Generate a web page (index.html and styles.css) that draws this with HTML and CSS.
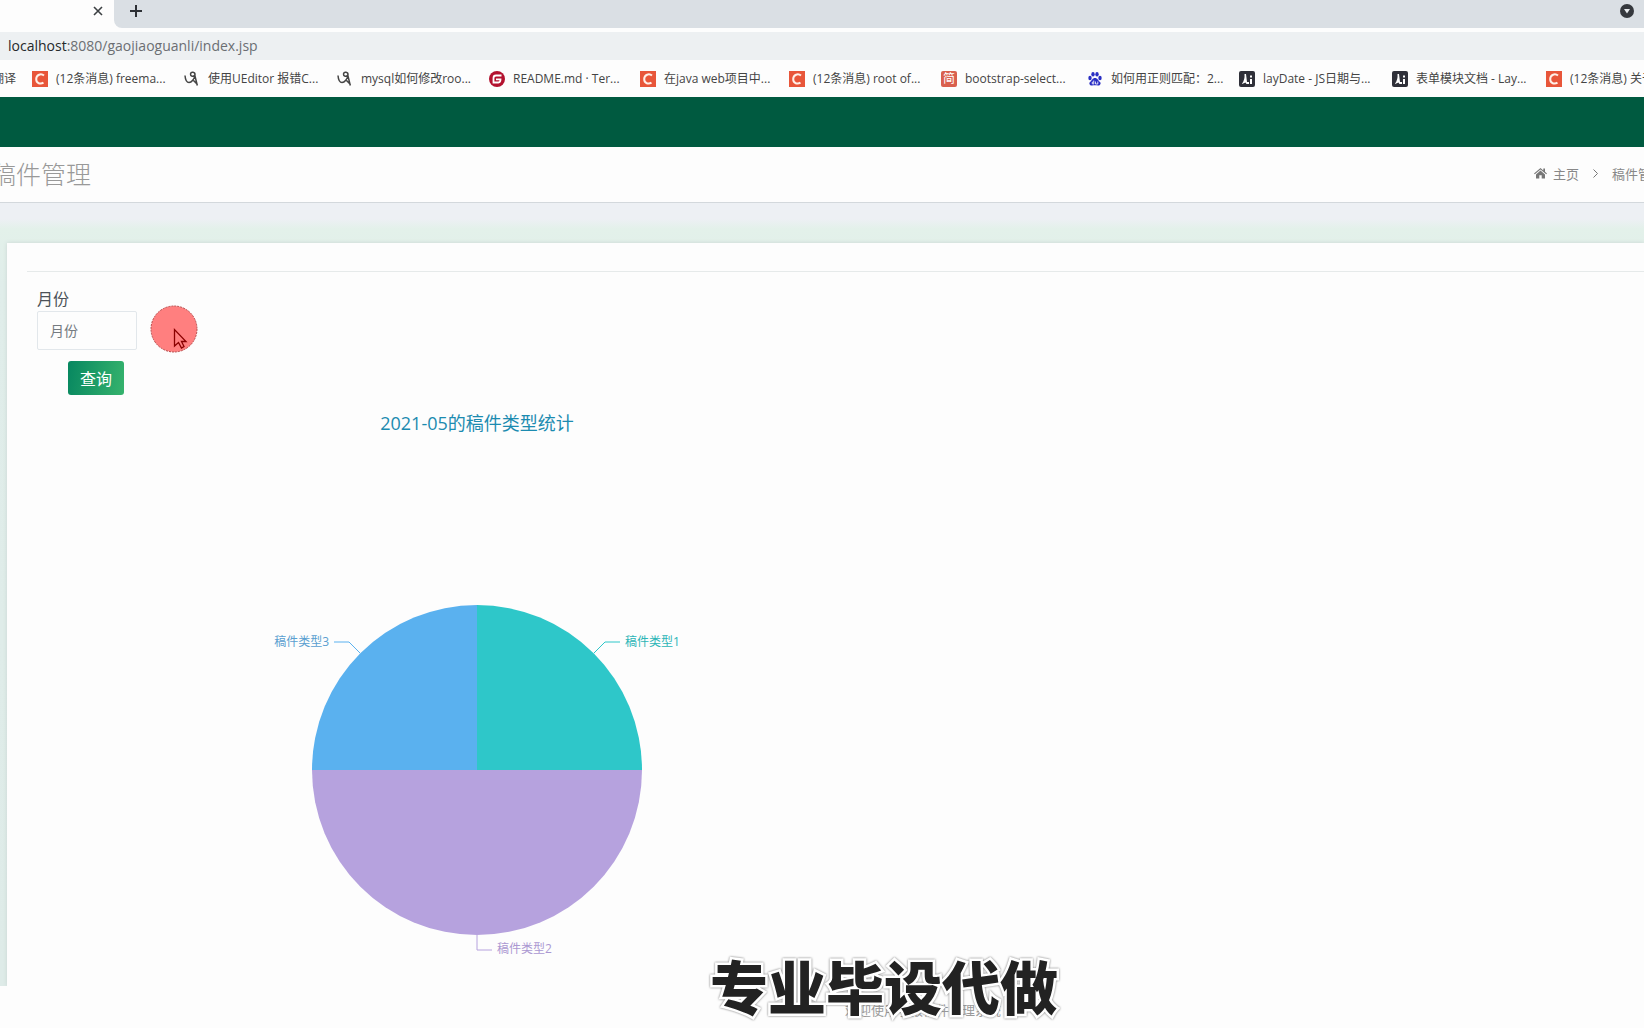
FILE: index.html
```html
<!DOCTYPE html>
<html lang="zh-CN">
<head>
<meta charset="utf-8">
<title>稿件管理</title>
<link rel="stylesheet" href="styles.css">
</head>
<body>
<svg class="defs" aria-hidden="true">
  <symbol id="i-c" viewBox="0 0 16 16"><rect width="16" height="16" fill="#e8563a"/><path d="M12 4.600C9.200 2.200 4.300 3.400 4.200 8.100C4.100 12.600 8.600 13.500 11.500 11.700" fill="none" stroke="#fff0e8" stroke-width="2"/></symbol>
  <symbol id="i-pen" viewBox="0 0 16 16"><path d="M1 4.500C1.300 8 2.500 11.500 5 11.500C7.500 11.500 10.500 8 11 4C11.200 .8 7 .4 6.500 3C6.300 5.600 9.500 6 10.800 4.200L13.300 14.500M9.500 9.500L13.500 13.500" fill="none" stroke="#444" stroke-width="1.500"/></symbol>
  <symbol id="i-g" viewBox="0 0 16 16"><circle cx="8" cy="8" r="8" fill="#b3122f"/><path d="M12.500 4.500H7Q4.500 4.500 4.500 7V11.500H9.500Q11.500 11.500 11.500 8.300H7" fill="none" stroke="#fff" stroke-width="1.800"/></symbol>
  <symbol id="i-paw" viewBox="0 0 16 16"><g fill="#2a2fc4"><ellipse cx="3" cy="7" rx="1.700" ry="2.200"/><ellipse cx="6" cy="3.300" rx="1.700" ry="2.300"/><ellipse cx="10" cy="3.300" rx="1.700" ry="2.300"/><ellipse cx="13" cy="7" rx="1.700" ry="2.200"/><path d="M8 7C10.500 7 11 9.500 13 11C14.500 12.500 13 14.800 11 14.500C9 14 7 14 5 14.500C3 14.800 1.500 12.500 3 11C5 9.500 5.500 7 8 7"/></g><path d="M6.800 9.500V13H5.500Q4.700 12 5.500 11H6.800M8.500 10.500V13H10.800V10.500" fill="none" stroke="#fff" stroke-width=".8"/></symbol>
  <symbol id="i-lay" viewBox="0 0 16 16"><rect width="16" height="16" rx="2" fill="#2f3039"/><path d="M3 12.500Q6 9 5.500 3H7L8 11H10V13H7.500L6.500 11.500L3 13Z M11 8H13V13H11Z M11 4.500H13V6.500H11Z" fill="#fff"/></symbol>
</svg>

<header class="browser">
  <div class="tabs">
    <div class="tab"><button class="icon-btn" aria-label="关闭标签页"><svg width="10" height="10" viewBox="0 0 10 10"><path d="M1 1L9 9M9 1L1 9" stroke="#3c4043" stroke-width="1.600"/></svg></button></div>
    <div class="strip">
      <button class="icon-btn" aria-label="新标签页"><svg width="12" height="12" viewBox="0 0 12 12"><path d="M6 0V12M0 6H12" stroke="#2d3035" stroke-width="2"/></svg></button>
      <button class="icon-btn" aria-label="搜索标签页"><svg width="14" height="14" viewBox="0 0 14 14"><circle cx="7" cy="7" r="7" fill="#35383d"/><path d="M4 5H10L7 9.500Z" fill="#e8ebee"/></svg></button>
    </div>
  </div>
  <div class="address"><span class="host">localhost</span>:8080/gaojiaoguanli/index.jsp</div>
  <nav class="bookmarks" aria-label="书签">
    <a class="cut" href="#">翻译</a>
    <a href="#"><svg><use href="#i-c"/></svg>(12条消息) freema...</a>
    <a href="#"><svg><use href="#i-pen"/></svg>使用UEditor 报错C...</a>
    <a href="#"><svg><use href="#i-pen"/></svg>mysql如何修改roo...</a>
    <a href="#"><svg><use href="#i-g"/></svg>README.md · Ter...</a>
    <a href="#"><svg><use href="#i-c"/></svg>在java web项目中...</a>
    <a href="#"><svg><use href="#i-c"/></svg>(12条消息) root of...</a>
    <a href="#"><span class="jian">简</span>bootstrap-select...</a>
    <a href="#"><svg><use href="#i-paw"/></svg>如何用正则匹配：2...</a>
    <a href="#"><svg><use href="#i-lay"/></svg>layDate - JS日期与...</a>
    <a href="#"><svg><use href="#i-lay"/></svg>表单模块文档 - Lay...</a>
    <a href="#"><svg><use href="#i-c"/></svg>(12条消息) 关于</a>
  </nav>
</header>

<div class="topbar"></div>
<div class="heading">
  <h1>稿件管理</h1>
  <nav class="crumbs" aria-label="面包屑">
    <a href="#"><svg width="13" height="12" viewBox="0 0 13 12"><path d="M6.500 1L0 6.500L.8 7.300L6.500 2.600L12.200 7.300L13 6.500L11 4.800V1.500H9.300V3.400Z M6.500 3.600L2 7.400V11.500H5.300V8.300H7.700V11.500H11V7.400Z" fill="#777"/></svg>主页</a>
    <svg width="5" height="9" viewBox="0 0 5 9"><path d="M.5 .5L4.500 4.500L.5 8.500" fill="none" stroke="#777"/></svg>
    <span>稿件管理</span>
  </nav>
</div>

<main class="content">
  <section class="card">
    <hr>
    <form class="filter">
      <label for="month">月份</label>
      <input id="month" type="text" placeholder="月份">
      <button class="query" type="button">查询</button>
    </form>
    <figure class="chart">
      <figcaption>2021-05的稿件类型统计</figcaption>
      <svg class="pie" width="440" height="370" viewBox="0 0 440 370" role="img" aria-label="稿件类型饼图">
        <path d="M220 175V10A165 165 0 0 1 385 175Z" fill="#2ec7c9"/>
        <path d="M220 175H385A165 165 0 0 1 55 175Z" fill="#b6a2de"/>
        <path d="M220 175H55A165 165 0 0 1 220 10Z" fill="#5ab1ef"/>
        <g fill="none">
          <path d="M337 58L348 47H363" stroke="#2ec7c9"/>
          <path d="M103 58L92 47H77" stroke="#5ab1ef"/>
          <path d="M220 340V355H235" stroke="#b6a2de"/>
        </g>
        <text x="368" y="51" fill="#2bb5b7">稿件类型1</text>
        <text x="72" y="51" fill="#5a9fd0" text-anchor="end">稿件类型3</text>
        <text x="240" y="358" fill="#ab98d2">稿件类型2</text>
      </svg>
    </figure>
  </section>
</main>
<footer class="footer">欢迎使用学报稿件管理系统<strong class="caption">专业毕设代做</strong></footer>

<svg class="pointer" width="48" height="48" viewBox="0 0 48 48" aria-hidden="true"><circle cx="24" cy="24" r="23" fill="#ff7f7f" stroke="#b84848" stroke-dasharray="2 1"/><path d="M24.500 24.500V41L28.500 37.500L31.500 43L34 41.500L31.500 36.500H36Z" fill="#ff7f7f" stroke="#8a0000" stroke-width="1.300"/></svg>
</body>
</html>
```
FILE: styles.css
```css
* { box-sizing: border-box; }
body {
  margin: 0;
  position: relative;
  overflow-x: hidden;
  background: #fdfdfd;
  color: #555;
  font-family: "Open Sans", "Noto Sans CJK SC", sans-serif;
  font-size: 13px;
}
a { color: inherit; text-decoration: none; }
.defs { position: absolute; width: 0; height: 0; }
.icon-btn { display: flex; padding: 0; border: 0; background: none; }

.tabs { display: flex; height: 32px; padding-bottom: 4px; background: #fdfdfd; }
.tab { width: 114px; padding: 6px 11px; display: flex; justify-content: flex-end; }
.strip {
  flex: 1;
  display: flex;
  justify-content: space-between;
  padding: 4px 10px 0 16px;
  background: #dadfe4;
  border-bottom-left-radius: 8px;
}
.strip .icon-btn { height: 14px; align-items: center; }
.address {
  height: 28px;
  padding-left: 8px;
  background: #edf0f2;
  color: #6b6e72;
  font-size: 14px;
  line-height: 28px;
}
.host { color: #25282b; }
.bookmarks {
  display: grid;
  grid-template-columns: 32px 152px 153px 152px 151px 149px 152px 146px 152px 153px 154px 152px;
  height: 37px;
  overflow: hidden;
  color: #444;
  font-size: 12px;
  line-height: 36px;
  white-space: nowrap;
}
.bookmarks a { display: flex; align-items: center; gap: 8px; }
.bookmarks svg { width: 16px; height: 16px; flex: none; }
.bookmarks .cut { justify-content: flex-end; padding-right: 16px; }
.jian {
  width: 16px;
  border-radius: 2px;
  background: #d9604e;
  color: #fff;
  line-height: 16px;
  text-align: center;
}

.topbar { height: 50px; background: #005a40; }
.heading {
  display: flex;
  justify-content: space-between;
  align-items: center;
  height: 56px;
  padding-bottom: 3px;
  border-bottom: 1px solid #d3d8dc;
  overflow: hidden;
  white-space: nowrap;
}
h1 { margin: 0 0 0 -9px; color: #999; font-size: 25px; font-weight: 300; }
.crumbs { display: flex; align-items: center; gap: 14px; margin-right: -20px; color: #888; }
.crumbs a { display: flex; align-items: center; gap: 6px; }

.content {
  padding: 40px 0 0 7px;
  overflow: hidden;
  background: linear-gradient(#edf0f4 0, #edf0f4 16px, #e3f1ea 26px, #e0edea 80px, #deebe8);
}
.card {
  height: 743px;
  padding: 28px 0 0 20px;
  background: #fdfdfd;
  box-shadow: 0 0 4px #c9d6d2;
}
hr { margin: 0; border: 0; border-top: 1px solid #e6eaea; }
.filter { display: flex; flex-direction: column; align-items: flex-start; padding: 15px 0 0 10px; }
.filter label { color: #4c5258; font-size: 16px; line-height: 24px; }
.filter input {
  width: 100px;
  height: 39px;
  padding: 0 12px;
  border: 1px solid #e2e7eb;
  border-radius: 2px;
  background: #fdfdfd;
  font: inherit;
  font-size: 14px;
}
.filter input::placeholder { color: #757b81; }
.query {
  width: 56px;
  height: 34px;
  margin: 11px 0 0 31px;
  padding: 0;
  border: 0;
  border-radius: 3px;
  background: linear-gradient(100deg, #078760, #36b36d);
  color: #fff;
  font: inherit;
  font-size: 16px;
}
.chart { display: flex; flex-direction: column; align-items: center; width: 900px; margin: 15px 0 0; }
figcaption { color: #1c8bb0; font-size: 18px; line-height: 26px; }
.pie { margin-top: 159px; overflow: visible; font-size: 12px; }

.footer { position: relative; padding: 14px 0; margin-left: 202px; text-align: center; color: #999; line-height: 20px; }
.caption {
  position: absolute;
  left: calc(50% - 213px);
  bottom: 14px;
  color: #222;
  font-family: "Noto Sans CJK SC", sans-serif;
  font-size: 58px;
  font-weight: 900;
  line-height: 70px;
  white-space: nowrap;
  -webkit-text-stroke: 5px #fff;
  paint-order: stroke fill;
  filter: drop-shadow(0 0 1px #777);
}
.pointer { position: absolute; left: 150px; top: 305px; }
```
